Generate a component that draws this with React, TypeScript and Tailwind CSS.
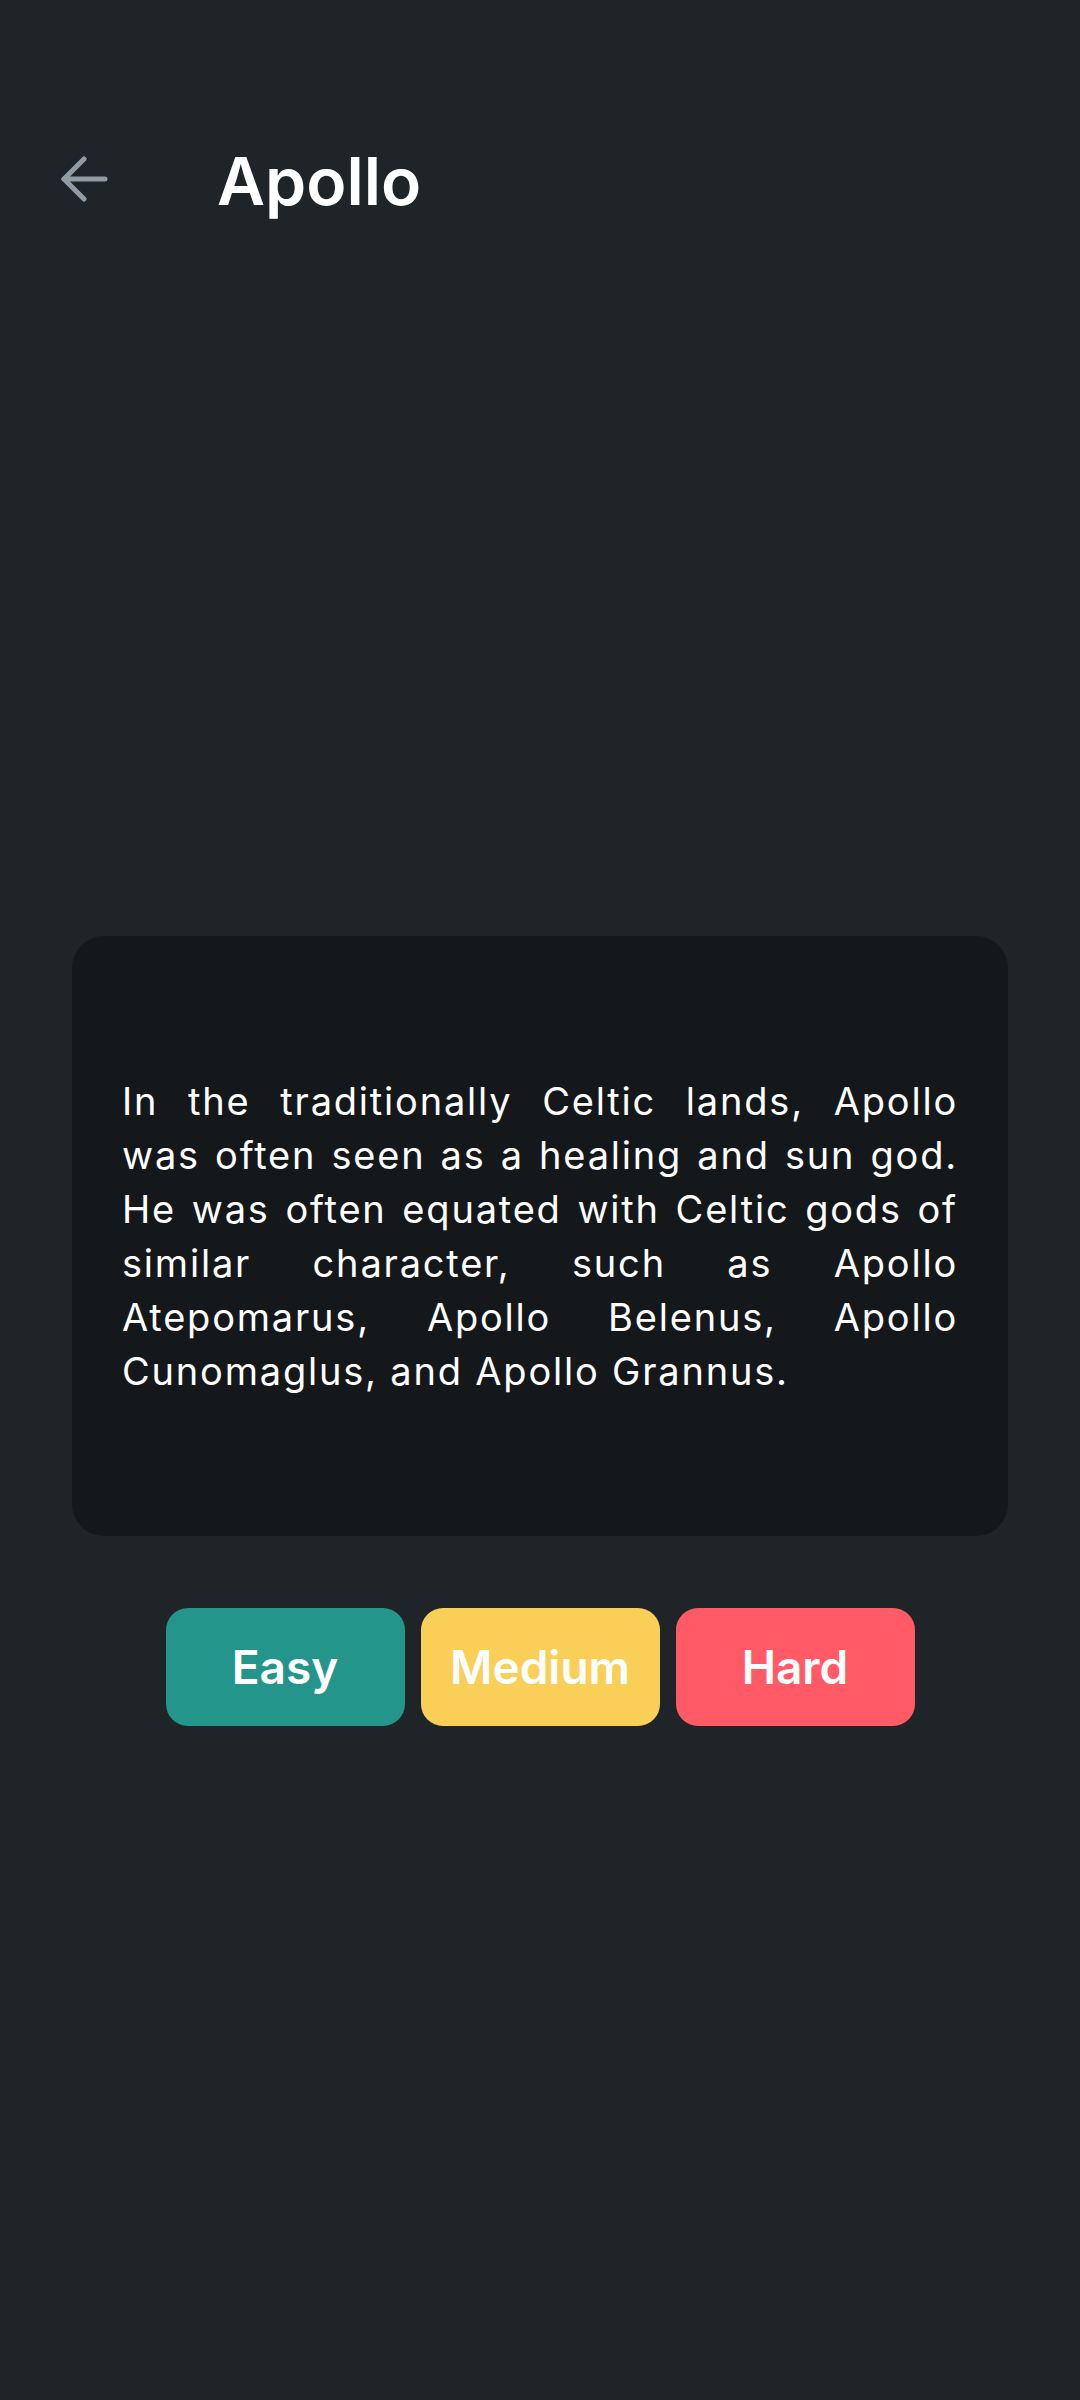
import React from "react";

const lines = [
  "In the traditionally Celtic lands, Apollo",
  "was often seen as a healing and sun god.",
  "He was often equated with Celtic gods of",
  "similar character, such as Apollo",
  "Atepomarus, Apollo Belenus, Apollo",
];
const lastLine = "Cunomaglus, and Apollo Grannus.";

export default function App() {
  return (
    <div
      className="min-h-[2400px] w-[1080px] bg-[#1e2428] flex flex-col"
      style={{ fontFamily: "Inter, 'Noto Sans', sans-serif" }}
    >
      <div className="flex items-center h-[80px] mt-[141px]">
        <svg
          className="ml-[60px] w-[50px] h-[50px]"
          viewBox="0 0 50 50"
          fill="none"
          stroke="#8f9ba5"
          strokeWidth="5"
          strokeLinecap="round"
          strokeLinejoin="round"
        >
          <path d="M45 23H4" />
          <path d="M24 3L4 23L24 43" />
        </svg>
        <div className="ml-[107px] text-[66px] font-semibold text-white leading-none">
          Apollo
        </div>
      </div>

      <div className="mt-[715px] mx-[72px] h-[600px] rounded-[32px] bg-[#15181b] flex flex-col justify-center px-[50px]">
        <div className="text-white text-[38px] leading-[54px] tracking-[1.8px]">
          {lines.map((l) => (
            <div key={l} className="text-justify [text-align-last:justify]">
              {l}
            </div>
          ))}
          <div>{lastLine}</div>
        </div>
      </div>

      <div className="mt-[72px] flex justify-center gap-[16px]">
        <div className="w-[239px] h-[118px] rounded-[22px] bg-[#23958a] flex items-center justify-center text-white text-[46px] font-semibold">
          Easy
        </div>
        <div className="w-[239px] h-[118px] rounded-[22px] bg-[#f9cf58] flex items-center justify-center text-white text-[46px] font-semibold">
          Medium
        </div>
        <div className="w-[239px] h-[118px] rounded-[22px] bg-[#ff5a65] flex items-center justify-center text-white text-[46px] font-semibold">
          Hard
        </div>
      </div>
    </div>
  );
}
